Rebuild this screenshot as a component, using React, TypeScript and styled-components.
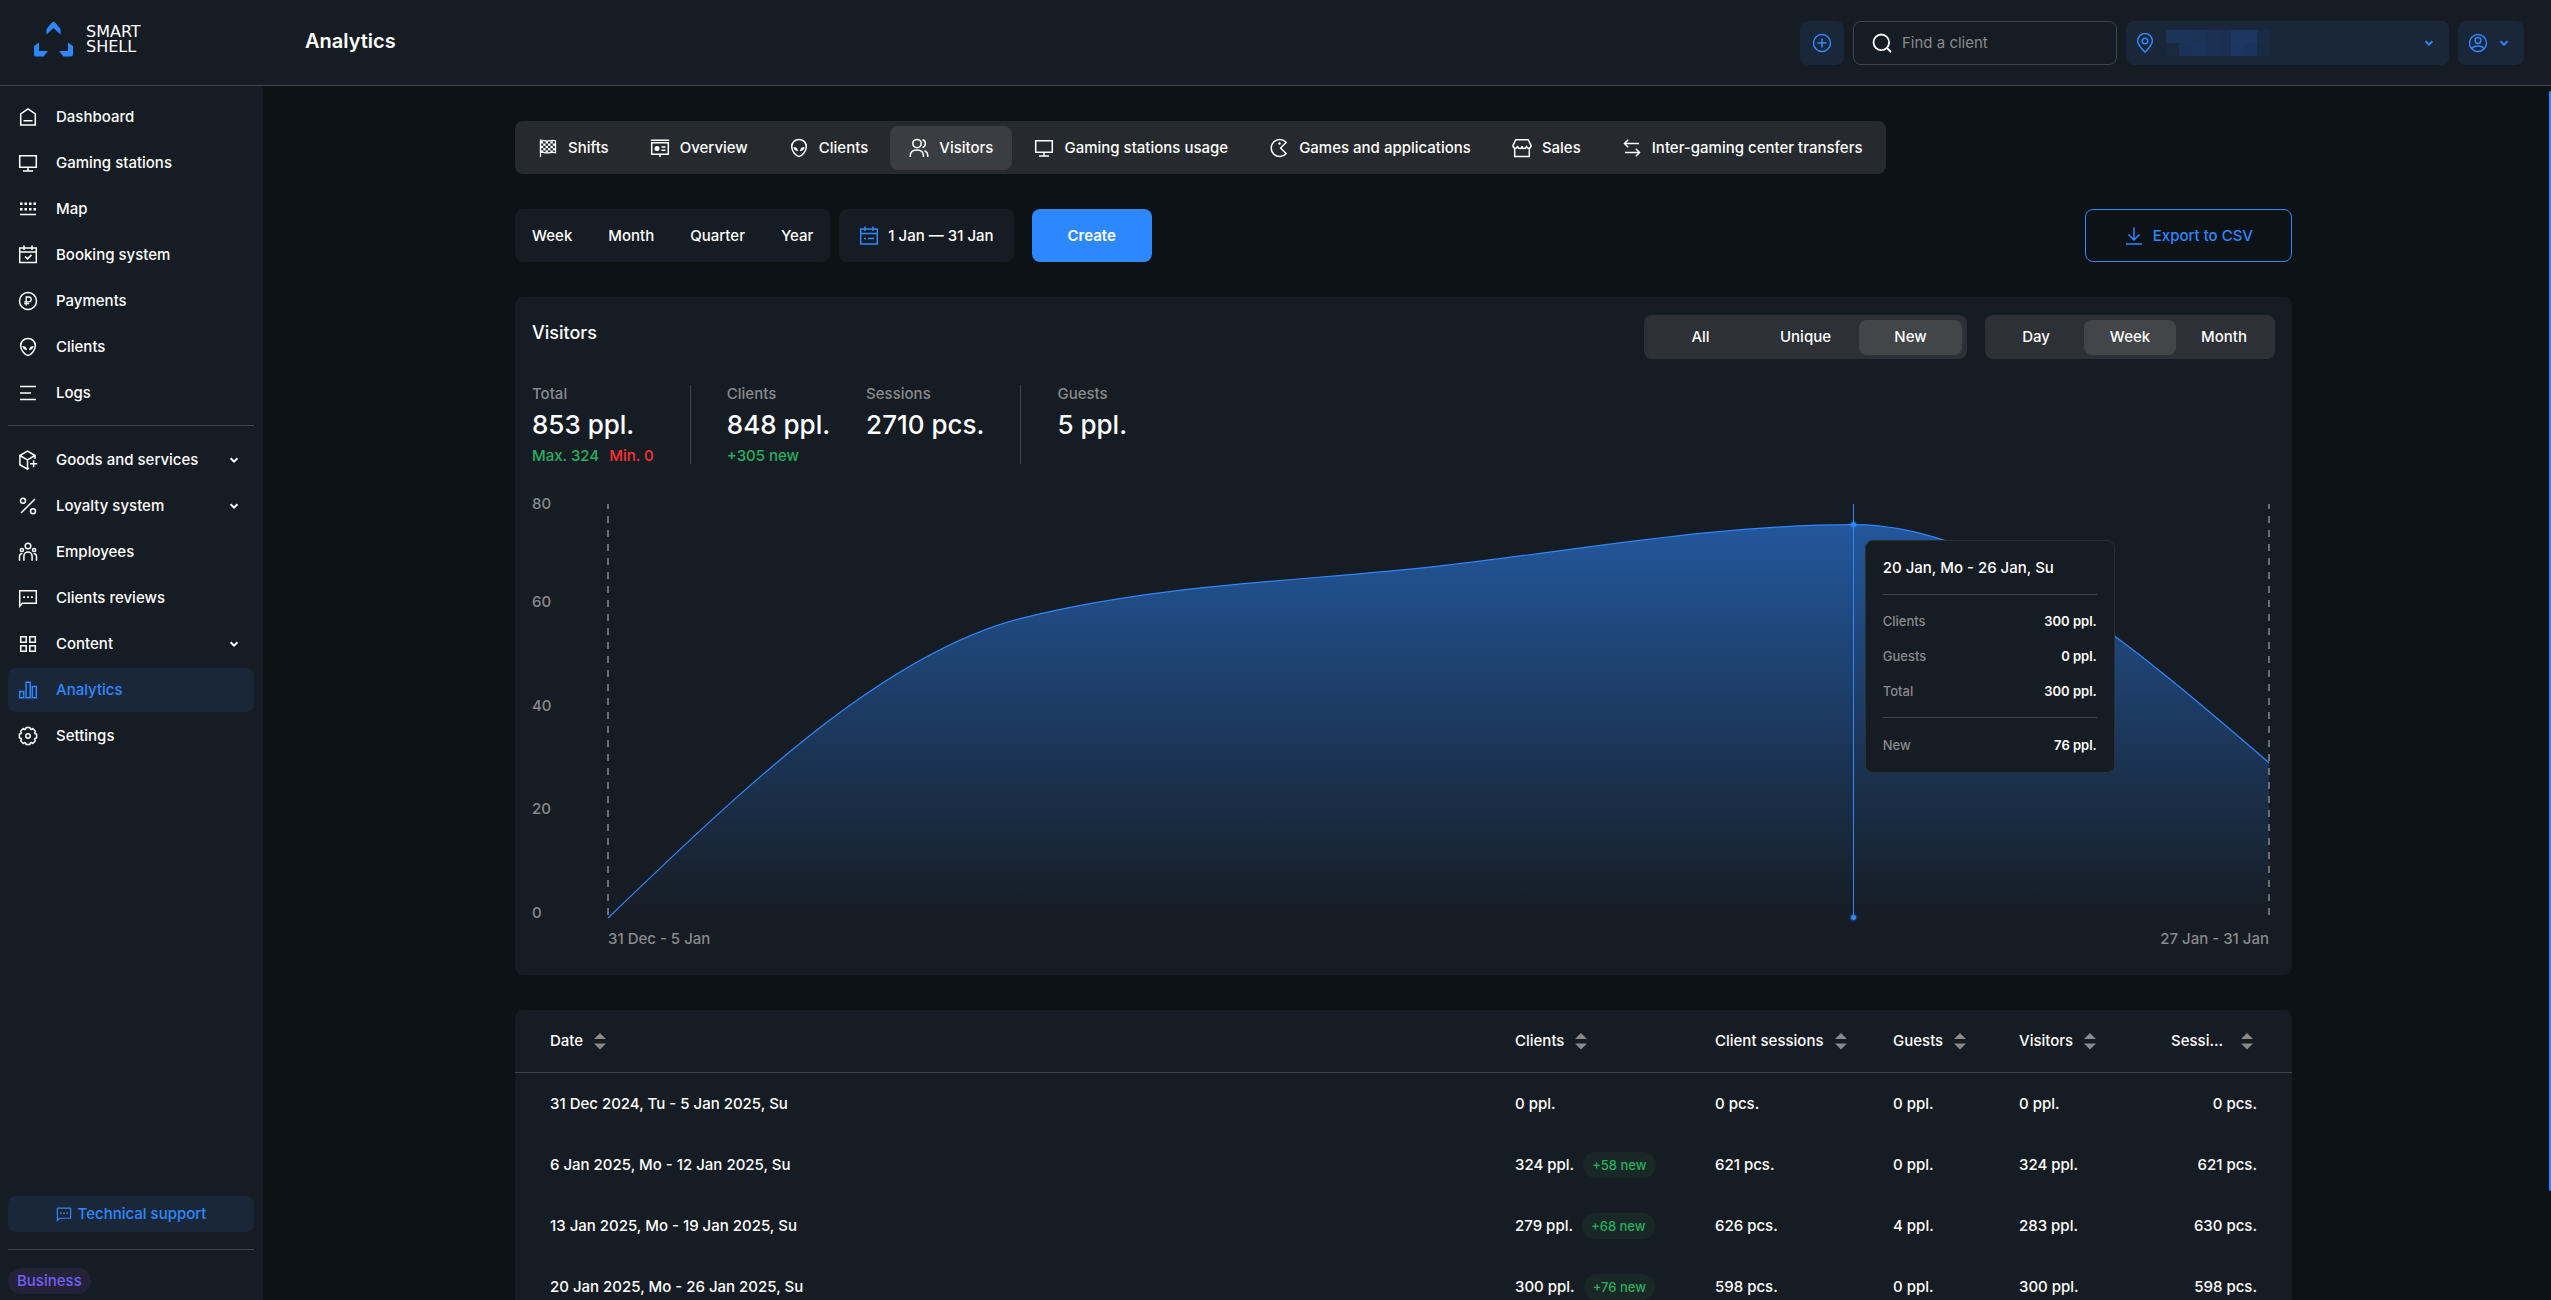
import React from 'react';
import styled, { createGlobalStyle, css } from 'styled-components';

const color = {
  page: '#0d1216',
  panel: '#161c23',
  line: '#41444d',
  blue: '#2d87ff',
  blueSoft: '#192739',
  text: '#ffffff',
  muted: '#888a8d',
  green: '#27ae60',
  red: '#ff3030',
  bar: '#26292d',
  barActive: '#3b3d42',
};

const GlobalStyle = createGlobalStyle`
  *, *::before, *::after { box-sizing: border-box; }
  body {
    margin: 0;
    background: ${color.page};
    color: ${color.text};
    font-family: Inter, "Liberation Sans", sans-serif;
    font-size: 15px;
    line-height: 18px;
    font-weight: 500;
  }
  button, input { font: inherit; color: inherit; border: 0; background: none; padding: 0; margin: 0; }
  button { cursor: pointer; }
  a { color: inherit; text-decoration: none; }
  h1, h2, p, dl, dd, dt, ul { margin: 0; padding: 0; font: inherit; }
`;

/* ---------- icons ---------- */

const Svg = styled.svg<{ $size?: number }>`
  display: block;
  flex: none;
  width: ${(p) => p.$size ?? 20}px;
  height: ${(p) => p.$size ?? 20}px;
  fill: none;
  stroke: currentColor;
  stroke-width: 1.5;
`;

type IconName =
  | 'home' | 'monitor' | 'map' | 'booking' | 'ruble' | 'alien' | 'logs' | 'box' | 'percent'
  | 'team' | 'chat' | 'grid' | 'bars' | 'gear' | 'flag' | 'board' | 'people' | 'pacman'
  | 'store' | 'transfer' | 'calendar' | 'download' | 'plus' | 'search' | 'pin' | 'user' | 'chevron';

const solid = { fill: 'currentColor', stroke: 'none' };

const gearPath = (() => {
  const pts: string[] = [];
  for (let i = 0; i < 8; i++) {
    const a = (i * Math.PI) / 4;
    [[-0.22, 8.8], [0.22, 8.8], [0.3, 7.4], [0.48, 7.4]].forEach(([d, r]) => {
      pts.push(`${(10 + r * Math.sin(a + d)).toFixed(2)} ${(10 - r * Math.cos(a + d)).toFixed(2)}`);
    });
  }
  return `M${pts.join('L')}Z`;
})();

const glyphs: Record<IconName, React.ReactNode> = {
  home: <path d="M2.7 18V7L10 1.8 17.3 7v11zM5.5 13.8h9" />,
  monitor: <path d="M1.7 2.7h16.6v11.6H1.7zM10 14.3v3.5M5 18h10" />,
  map: (
    <>
      {[2, 6.5, 11, 15.5].map((x) => [3.5, 9].map((y) => (
        <rect key={`${x}-${y}`} x={x} y={y} width="2.5" height="2.5" {...solid} />
      )))}
      <path d="M2 15.5h16" />
    </>
  ),
  booking: <path d="M1.7 3h16.6v14.6H1.7zM1.7 7h16.6M6 .5V5M14 .5V5M7 11.5l2.5 2.4 4-4" />,
  ruble: (
    <>
      <circle cx="10" cy="10" r="8.5" />
      <path d="M8.2 14.6V6h2.6a2.4 2.4 0 0 1 0 4.8H6.2M6.2 12.7h5" strokeWidth="1.3" />
    </>
  ),
  alien: (
    <>
      <path d="M10 1.6c4.3 0 7.3 3 7.3 7.2 0 4.6-4.4 9.6-7.3 9.6S2.7 13.4 2.7 8.8C2.7 4.6 5.7 1.6 10 1.6z" />
      <path d="M4.5 9c2.6 0 4.4 1.5 4.5 4.2C6.4 13 4.6 11.6 4.5 9zM15.5 9c-2.6 0-4.4 1.5-4.5 4.2 2.6-.2 4.4-1.6 4.500-4.200z" {...solid} />
    </>
  ),
  logs: <path d="M2 3.5h16M2 10h11M2 16.5h16" />,
  box: <path d="M17 9V5.5L9.5 1.2 1.9 5.5v9.2l7.6 4.4 1.5-.9M1.9 5.5l7.6 4.4L17 5.5M9.5 9.9v9M15.6 10.2v7M12 13.7h7.2" />,
  percent: (
    <>
      <circle cx="5" cy="4.8" r="2.5" />
      <circle cx="15" cy="15.3" r="2.5" />
      <path d="M17 3L3 17" />
    </>
  ),
  team: (
    <>
      <circle cx="10" cy="4" r="2.8" />
      <circle cx="3.9" cy="8" r="1.6" />
      <circle cx="16.1" cy="8" r="1.6" />
      <path d="M5.9 18.8v-4.6a4.1 4.1 0 0 1 8.2 0v4.6M1.5 18.8v-4.3c0-1.9 1.3-3 3-3M18.5 18.8v-4.3c0-1.9-1.3-3-3-3" />
    </>
  ),
  chat: (
    <>
      <path d="M1.7 18.2V2.7h16.6v12.6H4.5z" />
      <path d="M5.2 8.2h1.8v1.8H5.2zM9.1 8.2h1.8v1.8H9.1zM13 8.2h1.8v1.8H13z" {...solid} />
    </>
  ),
  grid: <path d="M2.7 2.7h5.5v5.5H2.7zM11.8 2.7h5.5v5.5h-5.5zM2.7 11.8h5.5v5.5H2.7zM11.8 11.8h5.5v5.5h-5.5z" />,
  bars: <path d="M1.7 11.5h4v6.2h-4zM8 2.3h4.2v15.4H8zM14.3 6.5h4v11.2h-4z" />,
  gear: (
    <>
      <path d={gearPath} strokeLinejoin="round" />
      <circle cx="10" cy="10" r="2.2" />
    </>
  ),
  flag: (
    <>
      <path d="M2.500 1.500V19" strokeWidth="1.200" />
      <path d="M2.500 2.500c3-1 4.500 1 7.500.4s5-1 7.500-.2v12c-2.500-.8-4.500-.4-7.500.2s-4.500-1.400-7.500-.4z" strokeWidth="1.200" />
      {[0, 1, 2, 3, 4].map((r) => [0, 1, 2, 3, 4, 5].filter((c) => (c + r) % 2 === 0).map((c) => (
        <rect key={`${r}-${c}`} x={2.800 + c * 2.400} y={3.200 + r * 2.300} width="2.400" height="2.300" {...solid} />
      )))}
    </>
  ),
  board: (
    <>
      <path d="M.8 2.3h18.4M1.7 4.7v11.6h16.6V4.7M1 4.7h18M10 16.3V19M11.5 9h4M11.5 12.3h4" />
      <circle cx="7" cy="10.5" r="2.5" {...solid} />
    </>
  ),
  people: (
    <>
      <circle cx="8" cy="5.6" r="4.2" />
      <path d="M1.2 19v-.8c0-4 2.7-6.2 6.6-6.2s6.7 2.2 6.7 6.2v.8M13.5 1.8c3.8 1 3.8 6.6 0 7.7M15.500 12.800c2.200 1 3.300 2.900 3.300 5.400v.8" />
    </>
  ),
  pacman: (
    <>
      <path d="M17.200 4.500A8.500 8.500 0 1 0 17.200 15.500L11.500 10z" strokeLinejoin="round" />
      <circle cx="10.500" cy="5.500" r="1.200" {...solid} />
    </>
  ),
  store: <path d="M2.700 9.500v9h14.600v-9M3.800 1.700h12.400L19 7.500c0 3.200-4.300 3.800-4.500.4-.2 3.500-4.400 3.500-4.500 0-.1 3.500-4.300 3.500-4.500 0C5.300 11.300 1 10.700 1 7.500z" />,
  transfer: <path d="M17 5.500H2.500M6.200 1.800L2.500 5.500l3.700 3.700M3 14.500h14.500M13.800 10.800l3.700 3.700-3.700 3.700" />,
  calendar: <path d="M1.700 3h16.600v15H1.700zM1.700 7.500h16.600M6 .5V5M14 .5V5M5 12.500h2M9 12.500h6" />,
  download: <path d="M10 1.500v12M4.500 8.500L10 14l5.500-5.500M2 18h16" />,
  plus: (
    <>
      <circle cx="10" cy="10" r="8.500" />
      <path d="M10 5.500v9M5.500 10h9" />
    </>
  ),
  search: (
    <>
      <circle cx="9.300" cy="9.300" r="7.800" strokeWidth="1.800" />
      <path d="M15 15l4 4" strokeWidth="1.800" />
    </>
  ),
  pin: (
    <>
      <path d="M10 19.300c4-4.200 7.400-7.600 7.400-11.300a7.400 7.400 0 0 0-14.800 0c0 3.700 3.400 7.100 7.400 11.300z" />
      <circle cx="10" cy="8" r="2.800" />
    </>
  ),
  user: (
    <>
      <circle cx="10" cy="10" r="8.500" />
      <circle cx="10" cy="7.500" r="2.900" />
      <path d="M4 16c1.500-4 10.500-4 12 0" />
    </>
  ),
  chevron: <path d="M6.600 8.300L10 11.700l3.400-3.400" strokeWidth="2" />,
};

const Icon = ({ name, size }: { name: IconName; size?: number }) => (
  <Svg viewBox="0 0 20 20" $size={size} aria-hidden="true">{glyphs[name]}</Svg>
);

/* ---------- header ---------- */

const Shell = styled.div`
  display: flex;
  flex-direction: column;
  height: 100vh;
  overflow: hidden;
`;

const Header = styled.header`
  flex: none;
  display: flex;
  align-items: center;
  height: 86px;
  padding: 0 27px 0 34px;
  background: ${color.panel};
  border-bottom: 1px solid ${color.line};
`;

const Logo = styled.a`
  display: flex;
  align-items: center;
  gap: 13px;
  width: 271px;
  padding-bottom: 7px;
  font-family: "DejaVu Sans", sans-serif;
  font-size: 16px;
  line-height: 15px;
  font-weight: 400;
`;

const LogoMark = styled.svg`
  display: block;
  width: 39px;
  height: 36px;
  fill: ${color.blue};
`;

const PageTitle = styled.h1`
  flex: 1;
  padding-bottom: 4px;
  font-size: 20px;
  line-height: 24px;
  font-weight: 600;
`;

const HeaderTools = styled.div`
  display: flex;
  gap: 9px;
`;

const SoftButton = styled.button`
  display: flex;
  align-items: center;
  justify-content: center;
  height: 44px;
  padding: 0 12px;
  border-radius: 8px;
  background: ${color.blueSoft};
  color: ${color.blue};
`;

const LocationButton = styled(SoftButton)`
  width: 323px;
  padding: 0 10px 0 9px;
  justify-content: flex-start;
  gap: 11px;
  & > :last-child { margin-left: auto; }
`;

const AccountButton = styled(SoftButton)`
  gap: 6px;
  padding: 0 10px;
`;

const Redacted = styled.span`
  display: grid;
  grid-template-columns: repeat(8, 13px);
  grid-auto-rows: 13px;
`;

const RedactedCell = styled.i<{ $tone: string }>`
  background: ${(p) => p.$tone};
`;

const SearchBox = styled.label`
  display: flex;
  align-items: center;
  gap: 10px;
  width: 264px;
  height: 44px;
  padding: 0 18px;
  border: 1px solid ${color.line};
  border-radius: 8px;
  input {
    flex: 1;
    min-width: 0;
    outline: none;
    font-weight: 400;
  }
  input::placeholder { color: ${color.muted}; opacity: 1; }
`;

/* ---------- sidebar ---------- */

const Body = styled.div`
  flex: 1;
  display: flex;
  min-height: 0;
`;

const Sidebar = styled.aside`
  flex: none;
  display: flex;
  flex-direction: column;
  width: 263px;
  padding: 9px 9px 6px 8px;
  background: ${color.panel};
`;

const NavList = styled.ul`
  display: flex;
  flex-direction: column;
  gap: 2px;
  list-style: none;
`;

const NavLink = styled.a<{ $active?: boolean }>`
  display: flex;
  align-items: center;
  gap: 18px;
  height: 44px;
  padding: 0 10px;
  border-radius: 8px;
  ${(p) => p.$active && css`
    background: ${color.blueSoft};
    color: ${color.blue};
  `}
  span { flex: 1; }
`;

const Rule = styled.hr<{ $above: number; $below: number }>`
  width: 100%;
  height: 1px;
  margin: ${(p) => p.$above}px 0 ${(p) => p.$below}px;
  border: 0;
  background: ${color.line};
`;

const SupportButton = styled(SoftButton)`
  height: 36px;
  margin-top: auto;
  gap: 6px;
`;

const PlanBadge = styled.span`
  align-self: flex-start;
  padding: 4px 9px;
  border-radius: 13px;
  background: #232236;
  color: #775cff;
`;

/* ---------- main ---------- */

const Main = styled.main`
  flex: 1;
  min-width: 0;
  padding: 35px 24px 0;
  overflow: hidden;
`;

const Content = styled.div`
  display: flex;
  flex-direction: column;
  gap: 35px;
  max-width: 1777px;
  margin: 0 auto;
`;

const ScrollRail = styled.div`
  flex: none;
  display: flex;
  justify-content: flex-end;
  width: 7px;
  padding-top: 5px;
`;

const ScrollThumb = styled.div`
  width: 2px;
  height: 91%;
  border-radius: 2px;
  background: ${color.blue};
`;

const Tabs = styled.nav`
  align-self: flex-start;
  display: flex;
  align-items: center;
  gap: 3px;
  height: 53px;
  padding: 0 4px;
  border-radius: 8px;
  background: ${color.bar};
`;

const Tab = styled.a<{ $active?: boolean }>`
  display: flex;
  align-items: center;
  gap: 10px;
  height: 44px;
  padding: 0 19px;
  border-radius: 8px;
  background: ${(p) => (p.$active ? color.barActive : 'transparent')};
`;

const Filters = styled.div`
  display: flex;
  align-items: center;
  height: 53px;
`;

const FilterBox = styled.div`
  display: flex;
  align-items: center;
  gap: 36px;
  height: 53px;
  padding: 0 17px;
  margin-right: 9px;
  border-radius: 8px;
  background: ${color.panel};
`;

const DateButton = styled.button`
  display: flex;
  align-items: center;
  gap: 9px;
  height: 53px;
  padding: 0 20px;
  margin-right: 18px;
  border-radius: 8px;
  background: ${color.panel};
  svg { color: ${color.blue}; }
`;

const CreateButton = styled.button`
  height: 53px;
  padding: 0 36px;
  border-radius: 8px;
  background: ${color.blue};
  font-weight: 600;
`;

const ExportButton = styled.button`
  display: flex;
  align-items: center;
  justify-content: center;
  gap: 9px;
  height: 53px;
  padding: 0 38px;
  margin-left: auto;
  border: 1px solid ${color.blue};
  border-radius: 8px;
  color: ${color.blue};
`;

const Card = styled.section`
  border-radius: 8px;
  background: ${color.panel};
`;

const ChartCard = styled(Card)`
  padding: 18px 17px 27px;
`;

const CardHead = styled.div`
  display: flex;
  gap: 18px;
  h2 {
    flex: 1;
    padding-top: 7px;
    font-size: 18px;
    line-height: 22px;
  }
`;

const Segments = styled.div`
  display: flex;
  align-items: center;
  gap: 2px;
  height: 44px;
  padding: 0 5px;
  border-radius: 8px;
  background: #2d3037;
`;

const Segment = styled.button<{ $width: number; $active?: boolean }>`
  width: ${(p) => p.$width}px;
  height: 35px;
  border-radius: 8px;
  background: ${(p) => (p.$active ? '#434649' : 'transparent')};
`;

const Stats = styled.dl`
  display: flex;
  gap: 36px;
  height: 79px;
  margin-top: 26px;
`;

const Stat = styled.div`
  display: flex;
  flex-direction: column;
  dt { color: ${color.muted}; }
`;

const StatValue = styled.dd`
  padding: 6px 0;
  font-size: 26px;
  line-height: 32px;
`;

const StatNote = styled.dd`
  display: flex;
  gap: 10px;
`;

const Note = styled.span<{ $tone: 'green' | 'red' }>`
  color: ${(p) => color[p.$tone]};
`;

const StatDivider = styled.div`
  width: 1px;
  background: ${color.line};
`;

/* ---------- chart ---------- */

const ChartGrid = styled.div`
  display: grid;
  grid-template-columns: 76px 1fr;
  margin-top: 31px;
  padding-right: 6px;
  color: ${color.muted};
`;

const YAxis = styled.div`
  display: flex;
  flex-direction: column;
  height: 427px;
`;

const Tick = styled.div`
  flex: 1;
  display: flex;
  align-items: flex-end;
  min-height: 0;
  &:first-child {
    flex: 0 0 12px;
    align-items: flex-start;
  }
`;

const Plot = styled.div`
  position: relative;
  height: 414px;
  margin-top: 9px;
`;

const PlotSvg = styled.svg`
  display: block;
  width: 100%;
  height: 100%;
  overflow: visible;
  path, line { vector-effect: non-scaling-stroke; }
`;

const Crosshair = styled.div`
  position: absolute;
  top: 0;
  bottom: 0;
  width: 1px;
  margin-left: -1px;
  background: ${color.blue};
`;

const Dot = styled.div`
  position: absolute;
  width: 5px;
  height: 5px;
  margin: -3px 0 0 -3px;
  border-radius: 50%;
  background: ${color.blue};
  box-shadow: 0 0 3px ${color.blue};
`;

const XAxis = styled.div`
  grid-column: 2;
  display: flex;
  justify-content: space-between;
  padding-top: 8px;
`;

const Tooltip = styled.div`
  position: absolute;
  top: 36px;
  width: 250px;
  margin-left: 11px;
  padding: 18px 17px;
  border: 1px solid #2b3036;
  border-radius: 8px;
  background: ${color.panel};
  color: ${color.text};
  font-size: 13px;
  h2 { font-size: 15px; }
`;

const TooltipRow = styled.div`
  display: flex;
  justify-content: space-between;
  height: 18px;
  margin-top: 17px;
  dt { color: ${color.muted}; }
  dd { font-weight: 600; }
`;

const points = [0, 58, 68, 76, 30];
const maxValue = 80;
const activeIndex = 3;

function monotonePath(values: number[]) {
  const n = values.length;
  const slope = values.slice(1).map((v, i) => v - values[i]);
  const t = values.map((_, i) => {
    if (i === 0 || i === n - 1) return 0;
    const a = slope[i - 1];
    const b = slope[i];
    return (Math.sign(a) + Math.sign(b)) * Math.min(Math.abs(a), Math.abs(b), Math.abs(a + b) / 4);
  });
  t[0] = (3 * slope[0] - t[1]) / 2;
  t[n - 1] = (3 * slope[n - 2] - t[n - 2]) / 2;
  const at = (x: number, v: number) => `${(x * 100).toFixed(3)} ${(maxValue - v).toFixed(3)}`;
  return values.slice(1).reduce(
    (d, v, i) => `${d}C${at(i + 1 / 3, values[i] + t[i] / 3)} ${at(i + 2 / 3, v - t[i + 1] / 3)} ${at(i + 1, v)}`,
    `M${at(0, values[0])}`,
  );
}

function VisitorsChart() {
  const line = monotonePath(points);
  const width = (points.length - 1) * 100;
  const left = `${(activeIndex / (points.length - 1)) * 100}%`;
  return (
    <ChartGrid>
      <YAxis>
        {[80, 60, 40, 20, 0].map((v) => <Tick key={v}>{v}</Tick>)}
      </YAxis>
      <Plot>
        <PlotSvg viewBox={`0 0 ${width} ${maxValue}`} preserveAspectRatio="none" role="img" aria-label="New visitors by week">
          <defs>
            <linearGradient id="area" x1="0" y1="0" x2="0" y2="1">
              <stop offset="0" stopColor="#2d87ff" stopOpacity="0.55" />
              <stop offset="1" stopColor="#2d87ff" stopOpacity="0" />
            </linearGradient>
          </defs>
          <path d={`${line}L${width} ${maxValue}L0 ${maxValue}Z`} fill="url(#area)" />
          {[0, width].map((x) => (
            <line key={x} x1={x} x2={x} y1="0" y2={maxValue} stroke="#6b6e74" strokeWidth="2" strokeDasharray="7 7" strokeDashoffset="2" />
          ))}
          <path d={line} fill="none" stroke="#2d87ff" strokeWidth="1.2" />
        </PlotSvg>
        <Crosshair style={{ left }} />
        <Dot style={{ left, top: `${100 - (points[activeIndex] / maxValue) * 100}%` }} />
        <Dot style={{ left, top: '100%' }} />
        <Tooltip style={{ left }} role="tooltip">
          <h2>20 Jan, Mo - 26 Jan, Su</h2>
          <Rule $above={17} $below={17} />
          <dl>
            <TooltipRow><dt>Clients</dt><dd>300 ppl.</dd></TooltipRow>
            <TooltipRow><dt>Guests</dt><dd>0 ppl.</dd></TooltipRow>
            <TooltipRow><dt>Total</dt><dd>300 ppl.</dd></TooltipRow>
          </dl>
          <Rule $above={17} $below={18} />
          <dl>
            <TooltipRow><dt>New</dt><dd>76 ppl.</dd></TooltipRow>
          </dl>
        </Tooltip>
      </Plot>
      <XAxis>
        <span>31 Dec - 5 Jan</span>
        <span>27 Jan - 31 Jan</span>
      </XAxis>
    </ChartGrid>
  );
}

/* ---------- table ---------- */

const Table = styled.table`
  width: 100%;
  border-collapse: separate;
  border-spacing: 0;
  table-layout: fixed;
  th, td {
    padding: 0;
    text-align: left;
    font-weight: 500;
    white-space: nowrap;
  }
  th { height: 63px; border-bottom: 1px solid ${color.line}; }
  td { height: 61px; }
  th:first-child, td:first-child { padding-left: 35px; }
  th:last-child, td:last-child { padding-right: 35px; text-align: right; }
`;

const Col = styled.col<{ $width?: number }>`
  width: ${(p) => (p.$width ? `${p.$width}px` : 'auto')};
`;

const SortButton = styled.button<{ $minLabel?: number }>`
  display: inline-flex;
  align-items: center;
  gap: 7px;
  vertical-align: middle;
  text-align: left;
  span { min-width: ${(p) => p.$minLabel ?? 0}px; }
`;

const CellLine = styled.div`
  display: flex;
  align-items: center;
  gap: 9px;
`;

const NewBadge = styled.span`
  padding: 4px 9px;
  border-radius: 13px;
  background: #192826;
  color: ${color.green};
  font-size: 13px;
`;

const SortIcon = () => (
  <Svg viewBox="0 0 20 20" aria-hidden="true">
    <path d="M4 8l6-6 6 6zM4 12.5l6 6 6-6z" fill="#888a8d" stroke="none" />
  </Svg>
);

const columns: { label: string; title?: string; minLabel?: number }[] = [
  { label: 'Date' },
  { label: 'Clients' },
  { label: 'Client sessions' },
  { label: 'Guests' },
  { label: 'Visitors' },
  { label: 'Sessi...', title: 'Sessions', minLabel: 59 },
];

const rows = [
  { date: '31 Dec 2024, Tu - 5 Jan 2025, Su', clients: 0, sessions: 0, guests: 0, visitors: 0, total: 0 },
  { date: '6 Jan 2025, Mo - 12 Jan 2025, Su', clients: 324, fresh: 58, sessions: 621, guests: 0, visitors: 324, total: 621 },
  { date: '13 Jan 2025, Mo - 19 Jan 2025, Su', clients: 279, fresh: 68, sessions: 626, guests: 4, visitors: 283, total: 630 },
  { date: '20 Jan 2025, Mo - 26 Jan 2025, Su', clients: 300, fresh: 76, sessions: 598, guests: 0, visitors: 300, total: 598 },
];

function VisitorsTable() {
  return (
    <Card>
      <Table>
        <colgroup>
          <Col />
          <Col $width={200} />
          <Col $width={178} />
          <Col $width={126} />
          <Col $width={126} />
          <Col $width={147} />
        </colgroup>
        <thead>
          <tr>
            {columns.map((c) => (
              <th key={c.label} scope="col">
                <SortButton $minLabel={c.minLabel} title={c.title}>
                  <span>{c.label}</span>
                  <SortIcon />
                </SortButton>
              </th>
            ))}
          </tr>
        </thead>
        <tbody>
          {rows.map((r) => (
            <tr key={r.date}>
              <td>{r.date}</td>
              <td>
                <CellLine>
                  {r.clients} ppl.
                  {r.fresh && <NewBadge>+{r.fresh} new</NewBadge>}
                </CellLine>
              </td>
              <td>{r.sessions} pcs.</td>
              <td>{r.guests} ppl.</td>
              <td>{r.visitors} ppl.</td>
              <td>{r.total} pcs.</td>
            </tr>
          ))}
        </tbody>
      </Table>
    </Card>
  );
}

/* ---------- page ---------- */

type NavItem = { icon: IconName; label: string; open?: boolean; active?: boolean };

const navTop: NavItem[] = [
  { icon: 'home', label: 'Dashboard' },
  { icon: 'monitor', label: 'Gaming stations' },
  { icon: 'map', label: 'Map' },
  { icon: 'booking', label: 'Booking system' },
  { icon: 'ruble', label: 'Payments' },
  { icon: 'alien', label: 'Clients' },
  { icon: 'logs', label: 'Logs' },
];

const navBottom: NavItem[] = [
  { icon: 'box', label: 'Goods and services', open: true },
  { icon: 'percent', label: 'Loyalty system', open: true },
  { icon: 'team', label: 'Employees' },
  { icon: 'chat', label: 'Clients reviews' },
  { icon: 'grid', label: 'Content', open: true },
  { icon: 'bars', label: 'Analytics', active: true },
  { icon: 'gear', label: 'Settings' },
];

const tabs: NavItem[] = [
  { icon: 'flag', label: 'Shifts' },
  { icon: 'board', label: 'Overview' },
  { icon: 'alien', label: 'Clients' },
  { icon: 'people', label: 'Visitors', active: true },
  { icon: 'monitor', label: 'Gaming stations usage' },
  { icon: 'pacman', label: 'Games and applications' },
  { icon: 'store', label: 'Sales' },
  { icon: 'transfer', label: 'Inter-gaming center transfers' },
];

const redactedTones = [
  '#1b3559', '#1c3458', '#1c3356', '#1c3053', '#1c2f52', '#1d3762', '#1d3763', '#192c45',
  '#1a2a3e', '#1b3156', '#1b345d', '#1b3054', '#1b2f52', '#1c3562', '#1c3360', '#192b43',
];

const Nav = ({ items }: { items: NavItem[] }) => (
  <NavList>
    {items.map((it) => (
      <li key={it.label}>
        <NavLink href="#" $active={it.active}>
          <Icon name={it.icon} />
          <span>{it.label}</span>
          {it.open && <Icon name="chevron" />}
        </NavLink>
      </li>
    ))}
  </NavList>
);

export default function App() {
  return (
    <Shell>
      <GlobalStyle />
      <Header>
        <Logo href="#" aria-label="Smart Shell">
          <LogoMark viewBox="0 0 39 36">
            <path d="M12.5 13.5V8L18 1.5Q19.5 0 21 1.5L26.5 8v5.5L19.5 7z" />
            <path d="M0 25l5-3.5V30h9l-4.5 5.5H2Q0 35.5 0 33.5z" />
            <path d="M39 25l-5-3.5V30h-9l4.5 5.5H37q2 0 2-2z" />
          </LogoMark>
          <span>SMART<br />SHELL</span>
        </Logo>
        <PageTitle>Analytics</PageTitle>
        <HeaderTools>
          <SoftButton aria-label="Add"><Icon name="plus" /></SoftButton>
          <SearchBox>
            <Icon name="search" />
            <input type="text" placeholder="Find a client" aria-label="Find a client" />
          </SearchBox>
          <LocationButton aria-label="Location" aria-haspopup="listbox">
            <Icon name="pin" />
            <Redacted>
              {redactedTones.map((tone, i) => <RedactedCell key={i} $tone={tone} />)}
            </Redacted>
            <Icon name="chevron" />
          </LocationButton>
          <AccountButton aria-label="Account" aria-haspopup="menu">
            <Icon name="user" />
            <Icon name="chevron" />
          </AccountButton>
        </HeaderTools>
      </Header>
      <Body>
        <Sidebar>
          <Nav items={navTop} />
          <Rule $above={10} $below={12} />
          <Nav items={navBottom} />
          <SupportButton>
            <Icon name="chat" size={16} />
            Technical support
          </SupportButton>
          <Rule $above={17} $below={18} />
          <PlanBadge>Business</PlanBadge>
        </Sidebar>
        <Main>
          <Content>
            <Tabs>
              {tabs.map((t) => (
                <Tab key={t.label} href="#" $active={t.active}>
                  <Icon name={t.icon} />
                  {t.label}
                </Tab>
              ))}
            </Tabs>
            <Filters>
              <FilterBox>
                {['Week', 'Month', 'Quarter', 'Year'].map((p) => <button key={p}>{p}</button>)}
              </FilterBox>
              <DateButton>
                <Icon name="calendar" />
                1 Jan — 31 Jan
              </DateButton>
              <CreateButton>Create</CreateButton>
              <ExportButton>
                <Icon name="download" />
                Export to CSV
              </ExportButton>
            </Filters>
            <ChartCard>
              <CardHead>
                <h2>Visitors</h2>
                <Segments>
                  {['All', 'Unique', 'New'].map((s) => (
                    <Segment key={s} $width={103} $active={s === 'New'} aria-pressed={s === 'New'}>{s}</Segment>
                  ))}
                </Segments>
                <Segments>
                  {['Day', 'Week', 'Month'].map((s) => (
                    <Segment key={s} $width={92} $active={s === 'Week'} aria-pressed={s === 'Week'}>{s}</Segment>
                  ))}
                </Segments>
              </CardHead>
              <Stats>
                <Stat>
                  <dt>Total</dt>
                  <StatValue>853 ppl.</StatValue>
                  <StatNote>
                    <Note $tone="green">Max. 324</Note>
                    <Note $tone="red">Min. 0</Note>
                  </StatNote>
                </Stat>
                <StatDivider />
                <Stat>
                  <dt>Clients</dt>
                  <StatValue>848 ppl.</StatValue>
                  <StatNote><Note $tone="green">+305 new</Note></StatNote>
                </Stat>
                <Stat>
                  <dt>Sessions</dt>
                  <StatValue>2710 pcs.</StatValue>
                </Stat>
                <StatDivider />
                <Stat>
                  <dt>Guests</dt>
                  <StatValue>5 ppl.</StatValue>
                </Stat>
              </Stats>
              <VisitorsChart />
            </ChartCard>
            <VisitorsTable />
          </Content>
        </Main>
        <ScrollRail><ScrollThumb /></ScrollRail>
      </Body>
    </Shell>
  );
}
